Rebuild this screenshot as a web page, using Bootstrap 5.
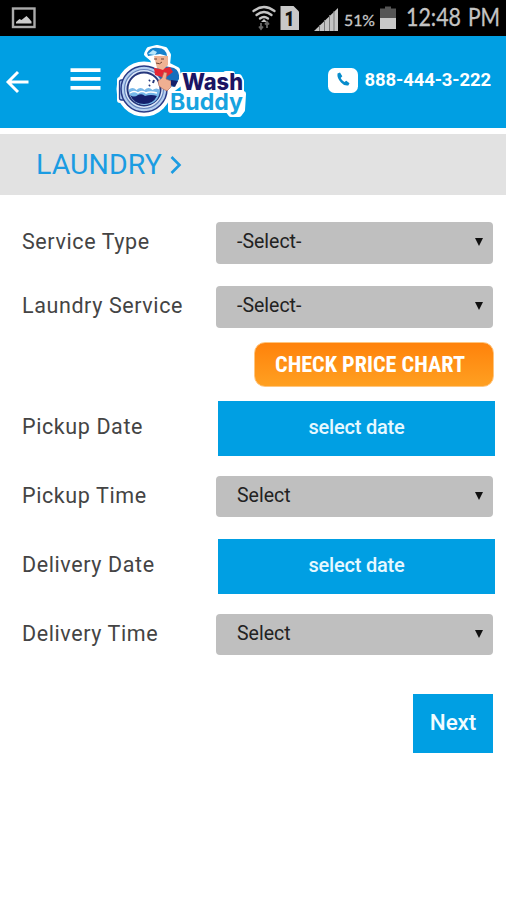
<!DOCTYPE html>
<html lang="en">
<head>
<meta charset="utf-8">
<meta name="viewport" content="width=device-width, initial-scale=1">
<title>Wash Buddy - Laundry</title>
<link href="https://cdn.jsdelivr.net/npm/bootstrap@5.3.0/dist/css/bootstrap.min.css" rel="stylesheet">
<style>
body{font-family:Roboto,"Liberation Sans",sans-serif;color:#333;background:#fff;min-height:900px}
svg{display:block;flex:none}
.status-strip{height:36px;background:#000}
.app-header{height:92px;background:#009fe3}
.phone-link{margin-right:15px}
.phone-icon{margin-right:7px}
.phone-text{font-size:18.5px;font-weight:700;line-height:24px;letter-spacing:-.12px;position:relative;top:-1px}
.title-strip{height:61px;margin-top:6px;background:#e2e2e2;color:#1b9ce2;padding-left:36px}
.title-strip h1{font-size:28.5px;font-weight:400;letter-spacing:.05px;line-height:36px}
.order-form{padding:27px 11px 0 22px}
.form-line{display:grid;grid-template-columns:194px 277px}
.gap-price{margin-top:14px}
.gap-service{margin-top:22.5px}
.gap-time{margin-top:20px}
.gap-delivery{margin-top:21.5px}
.gap-next{margin-top:38.5px;padding-right:2px}
.form-line label{font-size:21.5px;line-height:26px;font-weight:400;letter-spacing:.6px;color:#444;padding-bottom:1px}
.form-line .date-label{padding-bottom:3px}
.select-box{height:41.5px;background:#bfbfbf;border:0;border-radius:4px;font-size:19.5px;line-height:24px;color:#222;padding:0 10px 1px 21px}
.date-box{height:55px;margin-left:2px;margin-right:-2px;background:#009fe3;border:0;border-radius:0;font-size:20px;font-weight:500;letter-spacing:-.2px;line-height:24px;color:#e6f8ff;padding:0 0 3px}
.price-box{width:240px;height:45px;margin-right:1px;border:1px solid #ffc67f;border-radius:11px;background:linear-gradient(#ff820b,#ffa021);color:#fff;font-family:"Roboto Condensed",Roboto,sans-serif;padding:0}
.next-box{width:80px;height:59px;background:#009fe3;border:0;border-radius:0;color:#f2fcff;font-size:22.5px;font-weight:500;letter-spacing:-.1px;padding:0 0 1px}
</style>
<script src="https://cdn.jsdelivr.net/npm/bootstrap@5.3.0/dist/js/bootstrap.bundle.min.js"></script>
</head>
<body>
<div class="status-strip">
<svg width="506" height="36" viewBox="0 0 506 36" fill="none">
  <rect x="13" y="8.500" width="21.500" height="18.500" stroke="#aaa" stroke-width="2.400"/>
  <path d="M16 23.500v-1.500l3.500-3 2 1 5-4 2.500 2.500 2.500 3v2z" fill="#ccc"/>
  <g stroke="#c4c4c4" stroke-width="2.300" stroke-linecap="round">
    <path d="M253.500 11q10.500-8 21 0M256.500 15q7.500-6 15 0M260 18.500q4-3 8 0"/>
  </g>
  <path d="M264 19l3 3h-6z" fill="#c4c4c4"/>
  <path d="M261 29v-6m-2 3.500 2 2.500 2-2.500M267 22v6m-2-3.500 2-2.500 2 2.500" stroke="#666" stroke-width="1.800"/>
  <path d="M280.500 6h13l5.500 5.500V30h-18.500z" fill="#c8c8c8"/>
  <text x="284.500" y="26" font-family="Roboto" font-weight="900" font-size="21" fill="#111" textLength="10" lengthAdjust="spacingAndGlyphs">1</text>
  <path d="M314 31L338 8v23z" fill="#c4c4c4"/>
  <path d="M319.500 25v6M324.500 20v11M329.500 15v16M334 11v20" stroke="#777" stroke-width="1"/>
  <text x="344" y="25.500" font-family="Lato" font-size="15.500" fill="#c8c8c8" stroke="#c8c8c8" stroke-width=".3" textLength="31" lengthAdjust="spacingAndGlyphs">51%</text>
  <path d="M380 8.500h5V6.500h6v2h5V18h-16z" fill="#555"/>
  <path d="M380 18h16v11h-16z" fill="#c8c8c8"/>
  <text x="406" y="26" font-family="Lato" font-size="24.500" fill="#c4c4c4" stroke="#c4c4c4" stroke-width=".3" textLength="55" lengthAdjust="spacingAndGlyphs">12:48</text>
  <text x="468" y="26" font-family="Lato" font-size="24.500" fill="#c4c4c4" stroke="#c4c4c4" stroke-width=".3" textLength="32" lengthAdjust="spacingAndGlyphs">PM</text>
</svg>
</div>
<header class="app-header d-flex align-items-start">
  <svg width="110" height="92" viewBox="0 36 110 92" fill="none" role="img" aria-label="Back and menu">
    <path d="M28.500 82H8M18 72L8 82l10 10" stroke="#fff" stroke-width="2.900"/>
    <path d="M70.500 70.200h30M70.500 78.800h30M70.500 87.800h30" stroke="#fff" stroke-width="3.800"/>
  </svg>
  <svg width="145" height="84" viewBox="110 36 145 84" role="img" aria-label="Wash Buddy">
    <g fill="#fff" stroke="#fff" stroke-width="6" stroke-linejoin="round">
      <circle cx="144" cy="89" r="24.500"/>
      <path d="M120 80h5v20h-5zM156 68l-3-9-6-5 2-4 8-2 8 2 3 5-1 10 10 5 2 14-8 6-15 2z"/>
      <path d="M183 75h43v-1h6v3h7l2 4v13h2l-1 16-3 4h-8l-3-4h-57V94h13z"/>
    </g>
    <!-- washing machine door -->
    <rect x="119.500" y="80" width="6" height="20" rx="2" fill="#b3cdf0" stroke="#28418d" stroke-width="1.300"/>
    <circle cx="144" cy="89" r="23" fill="#b5cff0" stroke="#293b87" stroke-width="1.500"/>
    <circle cx="144" cy="89" r="19.500" fill="#dce9fa" stroke="#6584bd" stroke-width="1.200"/>
    <circle cx="144" cy="89" r="16.500" fill="#fff" stroke="#26377c" stroke-width="2"/>
    <path d="M128.500 90q4-4 8 0 4-4 8 0 4-4 8 0 4-3 7.500 0-1 14-15.500 15-13-1-16-15z" fill="#77b8e9"/>
    <path d="M130 95q4 3 8 0 4-2 7 1 6-2 12 0-4 8-13 8-10 0-14-9z" fill="#15206c"/>
    <path d="M130 93q4-3 8 0 4-3 8 0 4-2 11 0" fill="none" stroke="#fff" stroke-width="1.500"/>
    <path d="M149 86l1-1M153 83l1-3M149 81l1-1" stroke="#26377c" stroke-width="2"/>
    <!-- mascot -->
    <path d="M155 69l10-3 9 2q6 3 5 11l-5 8-9-2-6-8z" fill="#166ebd"/>
    <path d="M154 68l7 1 9-2 3 5-8 6-10-3z" fill="#e52734"/>
    <path d="M154 56l3 12 6 2 5-5v-9z" fill="#f0b394"/>
    <path d="M147 53q3-6 11-5 8 0 9 8l-7-2-12 2z" fill="#1682cc"/>
    <path d="M148 54l5-4 4 2-2 3z" fill="#b9e6fa"/>
    <path d="M154 59h3M161 59h3M156 63q4 2 6-1" stroke="#704434" stroke-width="1" fill="none"/>
    <path d="M163 89l-4-3-1-5 4-3 2-6 3 1-1 6 5 2v6l-4 4z" fill="#efb092" stroke="#a96458" stroke-width=".6"/>
    <path d="M171 80l7 1-3 6-4-2z" fill="#15206c"/>
    <g font-family="Inter, Roboto, sans-serif">
      <text x="182" y="90" font-size="22.500" font-weight="800" fill="#1b1464" textLength="61" lengthAdjust="spacingAndGlyphs">Wash</text>
      <text x="170" y="109.500" font-size="23" font-weight="700" fill="#16a3df" textLength="73" lengthAdjust="spacingAndGlyphs">Buddy</text>
    </g>
  </svg>
  <a href="tel:8884443222" class="phone-link d-flex align-items-center ms-auto mt-4 pt-2 text-white text-decoration-none">
    <svg width="30" height="25" viewBox="0 0 30 25" class="phone-icon"><rect width="30" height="25" rx="6.500" fill="#fff"/><path d="M9.500 5.500L12 4.500l2.300 3.700-1.600 1.900q1.200 2.800 3.700 4l1.900-1.300 3.200 2.400-1.200 2.300q-4 .7-7.300-3.100-4.200-4.400-3.500-8.900z" fill="#078ccc"/></svg>
    <span class="phone-text">888-444-3-222</span>
  </a>
</header>
<div class="title-strip d-flex align-items-center">
  <h1 class="m-0">LAUNDRY</h1>
  <svg width="12" height="20" viewBox="0 0 12 20" class="ms-2"><path d="M1.500 2l8 8-8 8" fill="none" stroke="#1b9ce2" stroke-width="2.600"/></svg>
</div>
<form class="order-form">
  <div class="form-line align-items-center"><label for="service">Service Type</label><button type="button" id="service" class="btn select-box d-flex align-items-center justify-content-between"><span>-Select-</span><svg width="8" height="8"><path d="M0 0h8L4 8z" fill="#111"/></svg></button></div>
  <div class="form-line align-items-center gap-service"><label for="laundry">Laundry Service</label><button type="button" id="laundry" class="btn select-box d-flex align-items-center justify-content-between"><span>-Select-</span><svg width="8" height="8"><path d="M0 0h8L4 8z" fill="#111"/></svg></button></div>
  <div class="d-flex justify-content-end gap-price"><button type="button" class="btn price-box"><svg width="238" height="43"><text x="20" y="29" font-weight="700" font-size="22" fill="#fff" textLength="190" lengthAdjust="spacingAndGlyphs">CHECK PRICE CHART</text></svg></button></div>
  <div class="form-line align-items-center gap-price"><label class="date-label" for="pdate">Pickup Date</label><button type="button" id="pdate" class="btn date-box">select date</button></div>
  <div class="form-line align-items-center gap-time"><label for="ptime">Pickup Time</label><button type="button" id="ptime" class="btn select-box d-flex align-items-center justify-content-between"><span>Select</span><svg width="8" height="8"><path d="M0 0h8L4 8z" fill="#111"/></svg></button></div>
  <div class="form-line align-items-center gap-delivery"><label class="date-label" for="ddate">Delivery Date</label><button type="button" id="ddate" class="btn date-box">select date</button></div>
  <div class="form-line align-items-center gap-time"><label for="dtime">Delivery Time</label><button type="button" id="dtime" class="btn select-box d-flex align-items-center justify-content-between"><span>Select</span><svg width="8" height="8"><path d="M0 0h8L4 8z" fill="#111"/></svg></button></div>
  <div class="d-flex justify-content-end gap-next"><button type="button" class="btn next-box">Next</button></div>
</form>
</body>
</html>
